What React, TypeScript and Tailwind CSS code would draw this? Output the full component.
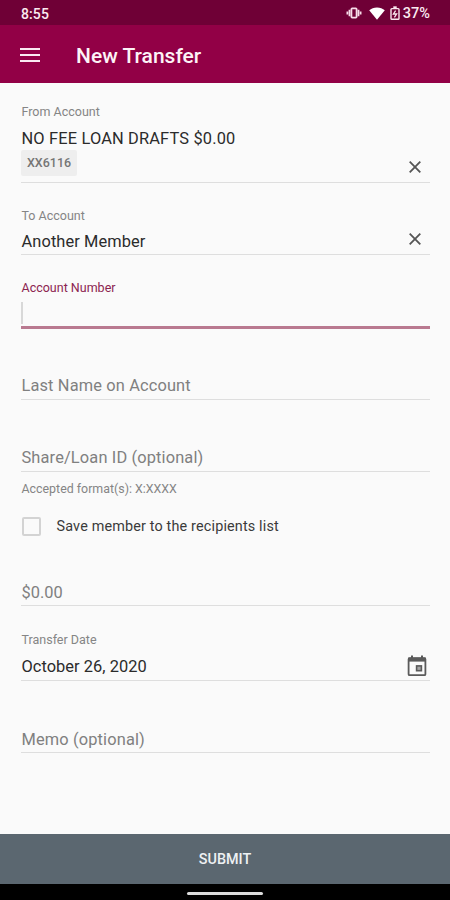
import type { ReactNode } from "react";

// ─── Icons ────────────────────────────────────────────────────────────────────

function VibrateIcon() {
    return (
        <svg width="16" height="12" viewBox="0 0 16 12" fill="none" stroke="#f7dce8">
            <rect x="5.4" y="1.4" width="5.2" height="9.2" rx="0.8" strokeWidth="1.8" />
            <path d="M3.5 2.8v6.4M12.5 2.8v6.4" strokeWidth="1.8" />
            <path d="M1.4 4.4v3.2M14.6 4.4v3.2" strokeWidth="1.8" />
        </svg>
    );
}

function WifiIcon() {
    return (
        <svg width="16" height="13" viewBox="0 0 16 13" fill="#fff">
            <path d="M8 12.8 0.2 3.3C2.2 1.5 4.9.4 8 .4s5.8 1.1 7.8 2.9z" />
        </svg>
    );
}

function BatteryIcon() {
    return (
        <svg width="10" height="14" viewBox="0 0 10 14" fill="none" stroke="#f9e6ee">
            <path d="M3.3 1.2h3.4" strokeWidth="1.8" />
            <rect x="1" y="2.6" width="8" height="10.6" rx="0.8" strokeWidth="1.4" />
            <path d="M5.6 4.6 3.4 8h3.2l-2.2 3.4" strokeWidth="1.3" />
        </svg>
    );
}

function ClearIcon() {
    return (
        <svg width="12" height="12" viewBox="0 0 12 12" fill="none" stroke="#555" strokeWidth="1.8">
            <path d="M0.7 0.7 11.3 11.3M11.3 0.7 0.7 11.3" />
        </svg>
    );
}

function CalendarIcon() {
    return (
        <svg width="20" height="22" viewBox="0 0 20 22" fill="none" stroke="#5a5a5a">
            <path d="M5 0.5v3M15 0.5v3" strokeWidth="2" />
            <rect x="1.6" y="3.2" width="16.8" height="17" rx="1" strokeWidth="1.8" />
            <path d="M1.2 4.6h17.6" strokeWidth="4" />
            <rect x="9.6" y="10.9" width="4.8" height="4.8" strokeWidth="1.6" fill="#a5a5a5" />
        </svg>
    );
}

// ─── Field ────────────────────────────────────────────────────────────────────

interface FieldProps {
    label?: string;
    placeholder?: string;
    action?: ReactNode;
    className?: string;
    children?: ReactNode;
}

function Field({ label, placeholder, action, className = "h-[72px]", children }: FieldProps) {
    return (
        <div className={["flex flex-col justify-end border-b border-[#dedede]", className].join(" ")}>
            {label && <div className="pl-[0.5px] text-[12.5px] leading-4 text-[#858585]">{label}</div>}
            <div className="flex items-end justify-between">
                {placeholder ? (
                    <div className="pb-[3px] pl-[0.5px] text-[16.4px] leading-5 tracking-[0.14px] text-[#808080]">{placeholder}</div>
                ) : (
                    <div className="text-[16.4px] text-[#2b2b2b]">{children}</div>
                )}
                {action}
            </div>
        </div>
    );
}

// ─── Screen ───────────────────────────────────────────────────────────────────

export default function App() {
    return (
        <div className="flex h-[900px] w-[450px] flex-col overflow-hidden bg-[#fafafa] font-['Roboto',sans-serif]">
            <div className="flex h-[25px] shrink-0 items-center justify-between bg-[#6f0036] pr-5 pl-[21px] pt-0.5 text-sm font-medium text-[#fbeaf1]">
                <span className="tracking-[0.1px]">8:55</span>
                <div className="flex items-center">
                    <VibrateIcon />
                    <span className="ml-[7px]"><WifiIcon /></span>
                    <span className="ml-[5px]"><BatteryIcon /></span>
                    <span className="ml-[3px] pt-px text-[14.5px]">37%</span>
                </div>
            </div>

            <header className="flex h-[58px] shrink-0 items-center bg-[#920046] pl-5">
                <div className="flex w-5 flex-col gap-[4px] pt-px">
                    <div className="h-[2px] bg-[#fbe9f1]" />
                    <div className="h-[2px] bg-[#fbe9f1]" />
                    <div className="h-[2px] bg-[#fbe9f1]" />
                </div>
                <h1 className="mt-[3px] ml-9 text-[21px] leading-7 font-medium text-[#fdf3f7]">New Transfer</h1>
            </header>

            <main className="flex grow flex-col pr-5 pl-[21px]">
                <Field label="From Account" className="h-[100px]" action={<span className="mr-[9px] mb-[9px]"><ClearIcon /></span>}>
                    <div className="mt-[9px] pl-[0.5px] leading-5 tracking-[0.16px]">NO FEE LOAN DRAFTS $0.00</div>
                    <div className="mt-px mb-1.5 flex h-[26px] w-14 items-center justify-center rounded-xs bg-[#eeeeee] text-[12.5px] font-medium text-[#757575]">
                        XX6116
                    </div>
                </Field>
                <Field label="To Account" action={<span className="mr-[9px] mb-[9px]"><ClearIcon /></span>}>
                    <div className="mt-2 pb-0.5 pl-[0.5px] leading-5 tracking-[0.1px]">Another Member</div>
                </Field>
                <div className="flex h-[74px] flex-col justify-end border-b-[3px] border-[#b97990]">
                    <div className="pl-[0.5px] text-[12.5px] leading-4 text-[#8c2450]">Account Number</div>
                    <div className="mt-[6px] mb-0.5 h-[22px] w-0.5 bg-[#d8d8d8]" />
                </div>
                <Field placeholder="Last Name on Account" className="h-[71px]" />
                <Field placeholder="Share/Loan ID (optional)" />
                <div className="mt-[9px] pl-[0.5px] text-[12.4px] leading-4 text-[#858585]">Accepted format(s): X:XXXX</div>
                <div className="mt-[19px] flex h-5 items-center">
                    <div className="ml-px h-[19px] w-[19px] rounded-xs border-2 border-[#d3d3d3]" />
                    <div className="ml-[15.5px] pt-0.5 text-[14.4px] tracking-[0.16px] text-[#3a3a3a]">Save member to the recipients list</div>
                </div>
                <Field className="h-[70px]">
                    <div className="pb-0.5 pl-[0.5px] leading-5 text-[#808080]">$0.00</div>
                </Field>
                <Field label="Transfer Date" className="h-[75px]" action={<span className="mr-[3px] mb-[3px]"><CalendarIcon /></span>}>
                    <div className="mt-[9px] pb-[3px] pl-[0.5px] leading-5 tracking-[0.05px]">October 26, 2020</div>
                </Field>
                <Field className="h-[72px]">
                    <div className="pb-0.5 pl-[0.5px] leading-5 tracking-[0.14px] text-[#808080]">Memo (optional)</div>
                </Field>
            </main>

            <button className="h-[50px] shrink-0 bg-[#5b6770] pt-0.5 text-[14.4px] font-medium text-[#eef1f3]">SUBMIT</button>
            <div className="flex h-4 shrink-0 items-center justify-center bg-black">
                <div className="mt-0.5 h-[3px] w-[76px] rounded-full bg-[#dcdcdc]" />
            </div>
        </div>
    );
}
